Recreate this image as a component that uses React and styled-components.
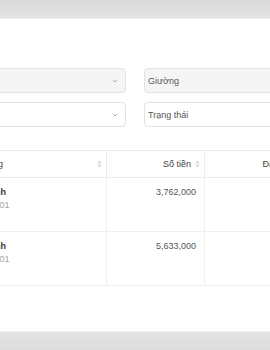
import { Fragment } from "react";
import { createGlobalStyle, styled } from "styled-components";

const GlobalStyle = createGlobalStyle`
  html, body {
    margin: 0;
    padding: 0;
    background: #fff;
    overflow: hidden;
  }
  body {
    font-family: "Liberation Sans", Arial, sans-serif;
  }
`;

const Frame = styled.div`
  display: flex;
  flex-direction: column;
  width: 270px;
  height: 350px;
  overflow: hidden;
`;

const Band = styled.div`
  flex: none;
  height: ${p => p.$h}px;
  background: ${p => p.$bottom
    ? "linear-gradient(#e3e3e3, #dcdcdc)"
    : "linear-gradient(#d9d9d9, #e4e4e4)"};
  border-${p => (p.$bottom ? "top" : "bottom")}: 1px solid #f1f1f1;
`;

const Main = styled.div`
  flex: 1;
  background: #fff;
  overflow: hidden;
`;

const Wrap = styled.div`
  width: 560px;
  margin-left: -150px;
  padding-top: 49px;
`;

const Filters = styled.div`
  display: grid;
  grid-template-columns: 276px 276px;
  column-gap: 18px;
  row-gap: 9px;
`;

const Select = styled.div`
  display: flex;
  align-items: center;
  justify-content: space-between;
  height: 25px;
  box-sizing: border-box;
  padding: 0 7px 0 3px;
  border: 1px solid #e3e3e3;
  border-radius: 4px;
  background: ${p => (p.$muted ? "#f5f5f5" : "#fff")};
  font-size: 9px;
  color: #555;
`;

const Chevron = () => (
  <svg width="6" height="4" viewBox="0 0 6 4">
    <path d="M0.8 0.8 L3 3 L5.2 0.8" fill="none" stroke="#a8a8a8" strokeWidth="1" />
  </svg>
);

const SortIcon = () => (
  <svg width="5" height="8" viewBox="0 0 5 8">
    <path d="M2.5 0.5 L4.6 3.2 L0.4 3.2 Z" fill="#d2d2d2" />
    <path d="M2.5 7.5 L4.6 4.8 L0.4 4.8 Z" fill="#d2d2d2" />
  </svg>
);

const Table = styled.div`
  margin-top: 23px;
  display: grid;
  grid-template-columns: 257px 98px 128px;
  border-top: 1px solid #ececec;
`;

const Head = styled.div`
  display: flex;
  align-items: center;
  justify-content: ${p => (p.$right ? "flex-end" : "space-between")};
  gap: 4px;
  height: 26px;
  padding: 0 4px 0 ${p => p.$pl || 8}px;
  border-bottom: 1px solid #ececec;
  border-right: 1px solid #ececec;
  font-size: 9px;
  color: #444;
  white-space: nowrap;
`;

const Cell = styled.div`
  display: flex;
  flex-direction: column;
  align-items: ${p => (p.$right ? "flex-end" : "flex-start")};
  gap: 3px;
  height: 54px;
  box-sizing: border-box;
  padding: 9px 8px 0 ${p => p.$pl || 8}px;
  border-bottom: 1px solid #efefef;
  border-right: 1px solid #efefef;
  font-size: 9px;
  color: #555;
  white-space: nowrap;
`;

const Name = styled.span`
  color: #3a3a3a;
  font-weight: 600;
`;

const Sub = styled.span`
  color: #a3a3a3;
`;

const rows = [
  { name: "Lê Thành", room: "Phòng 101", amount: "3,762,000", paid: "3,762,000" },
  { name: "Lý Thành", room: "Phòng 201", amount: "5,633,000", paid: "5,000,000" },
];

export default function App() {
  return (
    <Frame>
      <GlobalStyle />
      <Band $h={18} />
      <Main>
        <Wrap>
          <Filters>
            <Select $muted>
              <span>Phòng</span>
              <Chevron />
            </Select>
            <Select $muted>
              <span>Giường</span>
            </Select>
            <Select>
              <span>Tháng</span>
              <Chevron />
            </Select>
            <Select>
              <span>Trạng thái</span>
            </Select>
          </Filters>
          <Table>
            <Head $pl={105}>
              <span>Khách hàng</span>
              <SortIcon />
            </Head>
            <Head $right>
              <span>Số tiền</span>
              <SortIcon />
            </Head>
            <Head $right>
              <span>Đã thanh toán</span>
              <SortIcon />
            </Head>
            {rows.map(r => (
              <Fragment key={r.room}>
                <Cell $pl={116}>
                  <Name>{r.name}</Name>
                  <Sub>{r.room}</Sub>
                </Cell>
                <Cell $right>{r.amount}</Cell>
                <Cell $right>{r.paid}</Cell>
              </Fragment>
            ))}
          </Table>
        </Wrap>
      </Main>
      <Band $h={18} $bottom />
    </Frame>
  );
}
